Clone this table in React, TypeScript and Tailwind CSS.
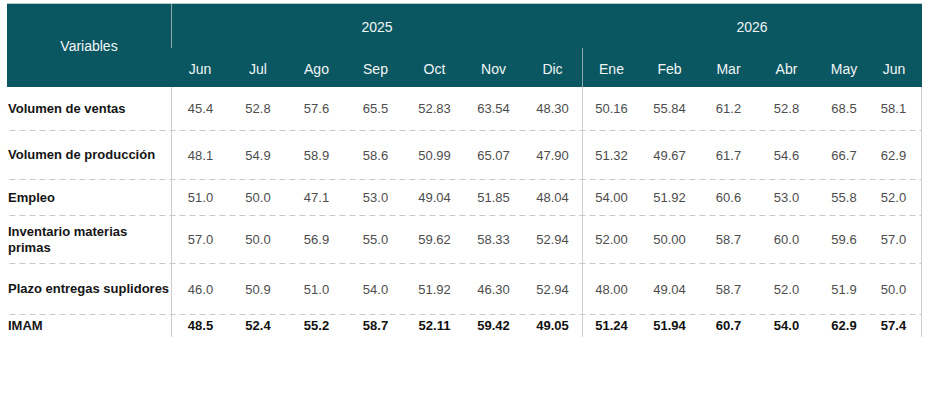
const months2025 = ['Jun', 'Jul', 'Ago', 'Sep', 'Oct', 'Nov', 'Dic'];
const months2026 = ['Ene', 'Feb', 'Mar', 'Abr', 'May', 'Jun'];

type Row = { label: string; values: string[]; height: string; bold?: boolean; last?: boolean };

const rows: Row[] = [
  { label: 'Volumen de ventas', height: 'h-[44px]', values: ['45.4', '52.8', '57.6', '65.5', '52.83', '63.54', '48.30', '50.16', '55.84', '61.2', '52.8', '68.5', '58.1'] },
  { label: 'Volumen de producción', height: 'h-[49px]', values: ['48.1', '54.9', '58.9', '58.6', '50.99', '65.07', '47.90', '51.32', '49.67', '61.7', '54.6', '66.7', '62.9'] },
  { label: 'Empleo', height: 'h-[36px]', values: ['51.0', '50.0', '47.1', '53.0', '49.04', '51.85', '48.04', '54.00', '51.92', '60.6', '53.0', '55.8', '52.0'] },
  { label: 'Inventario materias primas', height: 'h-[48px]', values: ['57.0', '50.0', '56.9', '55.0', '59.62', '58.33', '52.94', '52.00', '50.00', '58.7', '60.0', '59.6', '57.0'] },
  { label: 'Plazo entregas suplidores', height: 'h-[51px]', values: ['46.0', '50.9', '51.0', '54.0', '51.92', '46.30', '52.94', '48.00', '49.04', '58.7', '52.0', '51.9', '50.0'] },
  { label: 'IMAM', height: 'h-[22px]', bold: true, last: true, values: ['48.5', '52.4', '55.2', '58.7', '52.11', '59.42', '49.05', '51.24', '51.94', '60.7', '54.0', '62.9', '57.4'] },
];

const cols = 'grid grid-cols-[164px_58px_58px_59px_59px_59px_59px_59px_58px_59px_59px_57px_58px_49px]';
const dashed = 'bg-[linear-gradient(to_right,#c9c9c9_60%,transparent_0)] bg-[length:10px_1px] bg-repeat-x bg-bottom';

function ValueCell({ value, index, bold }: { value: string; index: number; bold?: boolean }) {
  const left = index === 0 || index === 7 ? 'border-l border-[#cdcdcd]' : '';
  const last = index === 12 ? 'pr-[7px] border-r border-[#cdcdcd]' : '';
  return (
    <div className={`flex items-center justify-center ${left} ${last} ${bold ? 'font-bold text-[#111]' : 'text-[#4d4d4d]'}`}>
      {value}
    </div>
  );
}

export default function App() {
  return (
    <div className="h-[402px] w-[936px] bg-white pt-[3px] pl-[7px] font-['Liberation_Sans',Arial,sans-serif] text-[13px]">
      <div className="w-[915px]">
        <div className={`${cols} grid-rows-[44px_39px] bg-[#0a5661] border-t border-[#b8cacc] text-[14px] text-[#f2f6f6]`}>
          <div className="row-span-2 flex items-center justify-center pt-[2px]">Variables</div>
          <div className="col-span-7 flex items-center justify-center pt-[3px] border-l border-[#8fa9ad]">2025</div>
          <div className="col-span-6 flex items-center justify-center pt-[3px]">2026</div>
          {months2025.map((m) => (
            <div key={m} className="flex items-center justify-center pt-[3px]">{m}</div>
          ))}
          {months2026.map((m, i) => (
            <div
              key={m + i}
              className={`flex items-center justify-center pt-[3px] ${i === 0 ? 'border-l border-[#8fa9ad]' : ''} ${i === 5 ? 'pr-[7px]' : ''}`}
            >
              {m}
            </div>
          ))}
        </div>
        {rows.map((row) => (
          <div key={row.label} className={`${cols} ${row.height} ${row.last ? '' : dashed}`}>
            <div className="flex items-center pl-[1px] pr-[2px] font-bold leading-[16.5px] text-[#151515]">
              <span className={row.label.startsWith('Plazo') ? 'whitespace-nowrap' : ''}>{row.label}</span>
            </div>
            {row.values.map((v, i) => (
              <ValueCell key={i} value={v} index={i} bold={row.bold} />
            ))}
          </div>
        ))}
      </div>
    </div>
  );
}
